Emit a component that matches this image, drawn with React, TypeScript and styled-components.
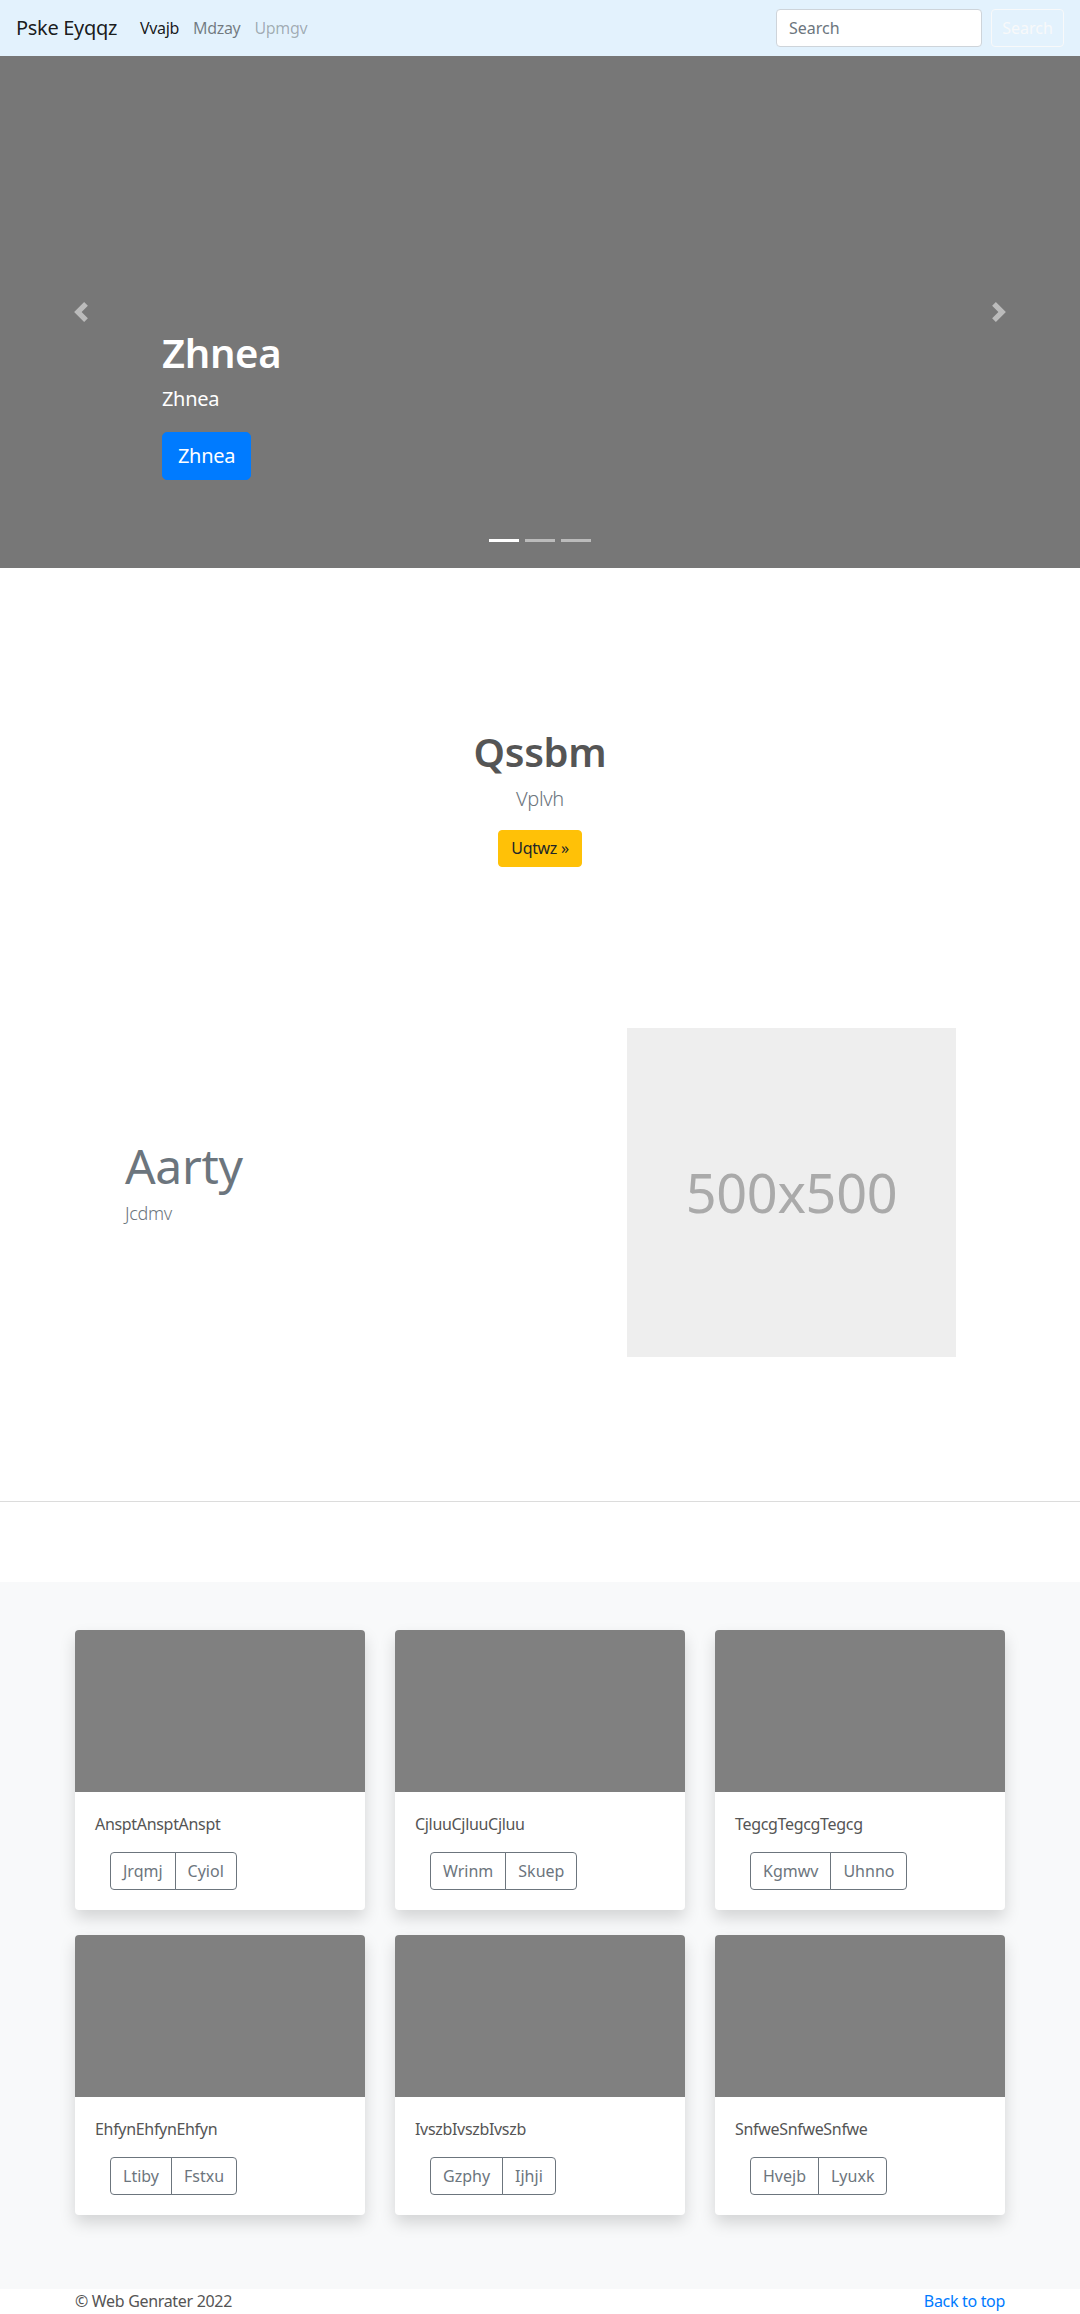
import React from "react";
import styled, { createGlobalStyle } from "styled-components";

const Global = createGlobalStyle`
  html, body { margin: 0; padding: 0; }
  body {
    font-family: "Noto Sans", "Open Sans", sans-serif;
    font-size: 16px;
    line-height: 1.5;
    letter-spacing: -0.02em;
    color: #212529;
    background: #fff;
  }
  * { box-sizing: border-box; }
`;

const NavBar = styled.nav`
  height: 56px;
  background: #e3f2fd;
  display: flex;
  align-items: center;
  padding: 0 16px 0 16px;
`;

const Brand = styled.a`
  font-size: 20px;
  line-height: 30px;
  color: rgba(0, 0, 0, 0.9);
  margin-right: 16px;
  text-decoration: none;
`;

const NavList = styled.div`
  display: flex;
  flex: 1;
`;

const NavLink = styled.a<{ $state: "active" | "normal" | "disabled" }>`
  padding: 8px 7px;
  font-size: 16px;
  line-height: 24px;
  text-decoration: none;
  color: ${(p) =>
    p.$state === "active"
      ? "rgba(0,0,0,0.9)"
      : p.$state === "disabled"
      ? "rgba(0,0,0,0.3)"
      : "rgba(0,0,0,0.5)"};
`;

const SearchForm = styled.form`
  display: flex;
  gap: 9px;
`;

const SearchInput = styled.input`
  width: 206px;
  height: 38px;
  padding: 6px 12px;
  font: inherit;
  font-size: 16px;
  color: #495057;
  background: #fff;
  border: 1px solid #ced4da;
  border-radius: 4px;
  &::placeholder { color: #6c757d; }
`;

const OutlineLightButton = styled.button`
  width: 73px;
  height: 38px;
  padding: 0;
  font: inherit;
  font-size: 16px;
  color: #f8f9fa;
  background: transparent;
  border: 1px solid #f8f9fa;
  border-radius: 4px;
`;

const Carousel = styled.section`
  position: relative;
  height: 512px;
  background: #777;
  overflow: hidden;
`;

const Control = styled.div<{ $side: "left" | "right" }>`
  position: absolute;
  top: 0;
  bottom: 0;
  ${(p) => p.$side}: 0;
  width: 15%;
  display: flex;
  align-items: center;
  justify-content: center;
  opacity: 0.5;
`;

const Indicators = styled.ol`
  position: absolute;
  left: 0;
  right: 0;
  bottom: 26px;
  margin: 0;
  padding: 0;
  list-style: none;
  display: flex;
  justify-content: center;
  gap: 6px;
`;

const Indicator = styled.li<{ $active?: boolean }>`
  width: 30px;
  height: 3px;
  background: #fff;
  opacity: ${(p) => (p.$active ? 1 : 0.5)};
`;

const Caption = styled.div`
  position: absolute;
  left: 15%;
  bottom: 88px;
  color: #fff;
`;

const CaptionTitle = styled.h1`
  margin: 0 0 7px;
  font-size: 40px;
  line-height: 48px;
  font-weight: 600;
`;

const CaptionText = styled.p`
  margin: 0 0 18px;
  font-size: 20px;
  line-height: 30px;
`;

const PrimaryLgButton = styled.a`
  display: inline-block;
  width: 89px;
  padding: 8px 0;
  text-align: center;
  font-size: 20px;
  line-height: 30px;
  color: #fff;
  background: #007bff;
  border: 1px solid #007bff;
  border-radius: 5px;
  text-decoration: none;
`;

const Intro = styled.section`
  padding: 160px 0 161px;
  text-align: center;
`;

const IntroTitle = styled.h2`
  margin: 0 0 8px;
  font-size: 40px;
  line-height: 48px;
  font-weight: 600;
  color: #555;
`;

const IntroText = styled.p`
  margin: 0 0 16px;
  font-size: 20px;
  line-height: 30px;
  font-weight: 300;
  color: #6c757d;
`;

const WarningButton = styled.a`
  display: inline-block;
  width: 84px;
  padding: 6px 0;
  text-align: center;
  font-size: 16px;
  line-height: 23px;
  color: #212529;
  background: #ffc107;
  border: 1px solid #ffc107;
  border-radius: 4px;
  text-decoration: none;
`;

const Feature = styled.section`
  display: flex;
  align-items: center;
  padding: 0 0 144px;
`;

const FeatureText = styled.div`
  width: 627px;
  padding-left: 125px;
`;

const FeatureTitle = styled.h2`
  margin: 0 0 5px;
  font-size: 48px;
  line-height: 59px;
  font-weight: 400;
  color: #6c757d;
`;

const FeatureLead = styled.p`
  margin: 0 0 23px;
  font-size: 18px;
  line-height: 27px;
  font-weight: 300;
  color: #6c757d;
`;

const Placeholder = styled.div`
  width: 329px;
  height: 329px;
  background: #eee;
  color: #aaa;
  display: flex;
  align-items: center;
  justify-content: center;
  font-size: 54px;
  font-weight: 400;
`;

const Rule = styled.hr`
  margin: 0 0 80px;
  border: 0;
  border-top: 1px solid #dcdcdc;
`;

const Album = styled.section`
  background: #f8f9fa;
  padding: 48px 0 74px;
`;

const CardGrid = styled.div`
  width: 930px;
  margin: 0 auto;
  display: grid;
  grid-template-columns: repeat(3, 1fr);
  column-gap: 30px;
  row-gap: 25px;
`;

const Card = styled.div`
  background: #fff;
  border-radius: 4px;
  overflow: hidden;
  box-shadow: 0 8px 16px rgba(0, 0, 0, 0.15);
`;

const CardImage = styled.div`
  height: 162px;
  background: #808080;
`;

const CardBody = styled.div`
  padding: 20px 20px 20px;
`;

const CardText = styled.p`
  margin: 0 0 16px;
  font-size: 16px;
  line-height: 24px;
  color: #555;
`;

const ButtonGroup = styled.div`
  display: inline-flex;
  margin-left: 15px;
`;

const GroupButton = styled.button`
  height: 38px;
  padding: 6px 12px;
  font: inherit;
  font-size: 16px;
  line-height: 24px;
  color: #6c757d;
  background: transparent;
  border: 1px solid #6c757d;
  &:first-child { border-radius: 4px 0 0 4px; }
  &:last-child { border-radius: 0 4px 4px 0; margin-left: -1px; }
`;

const Footer = styled.footer`
  width: 930px;
  margin: 0 auto;
  padding: 0 0 48px;
  display: flex;
  justify-content: space-between;
  font-size: 16px;
  line-height: 24px;
  color: #555;
`;

const FooterLink = styled.a`
  color: #007bff;
  text-decoration: none;
`;

const Chevron = ({ dir }: { dir: "prev" | "next" }) => (
  <svg width="20" height="20" viewBox="0 0 8 8" fill="#fff">
    {dir === "prev" ? (
      <path d="M5.25 0l-4 4 4 4 1.5-1.5L4.25 4l2.5-2.5L5.25 0z" />
    ) : (
      <path d="M2.75 0l-1.5 1.5L3.75 4l-2.5 2.5L2.75 8l4-4-4-4z" />
    )}
  </svg>
);

const cards = [
  { title: "AnsptAnsptAnspt", a: "Jrqmj", b: "Cyiol" },
  { title: "CjluuCjluuCjluu", a: "Wrinm", b: "Skuep" },
  { title: "TegcgTegcgTegcg", a: "Kgmwv", b: "Uhnno" },
  { title: "EhfynEhfynEhfyn", a: "Ltiby", b: "Fstxu" },
  { title: "IvszbIvszbIvszb", a: "Gzphy", b: "Ijhji" },
  { title: "SnfweSnfweSnfwe", a: "Hvejb", b: "Lyuxk" },
];

export default function App() {
  return (
    <>
      <Global />
      <NavBar>
        <Brand href="#">Pske Eyqqz</Brand>
        <NavList>
          <NavLink $state="active" href="#">Vvajb</NavLink>
          <NavLink $state="normal" href="#">Mdzay</NavLink>
          <NavLink $state="disabled" href="#">Upmgv</NavLink>
        </NavList>
        <SearchForm onSubmit={(e) => e.preventDefault()}>
          <SearchInput placeholder="Search" />
          <OutlineLightButton type="submit">Search</OutlineLightButton>
        </SearchForm>
      </NavBar>

      <Carousel>
        <Control $side="left"><Chevron dir="prev" /></Control>
        <Control $side="right"><Chevron dir="next" /></Control>
        <Caption>
          <CaptionTitle>Zhnea</CaptionTitle>
          <CaptionText>Zhnea</CaptionText>
          <PrimaryLgButton href="#">Zhnea</PrimaryLgButton>
        </Caption>
        <Indicators>
          <Indicator $active />
          <Indicator />
          <Indicator />
        </Indicators>
      </Carousel>

      <Intro>
        <IntroTitle>Qssbm</IntroTitle>
        <IntroText>Vplvh</IntroText>
        <WarningButton href="#">Uqtwz »</WarningButton>
      </Intro>

      <Feature>
        <FeatureText>
          <FeatureTitle>Aarty</FeatureTitle>
          <FeatureLead>Jcdmv</FeatureLead>
        </FeatureText>
        <Placeholder>500x500</Placeholder>
      </Feature>

      <Rule />

      <Album>
        <CardGrid>
          {cards.map((c) => (
            <Card key={c.title}>
              <CardImage />
              <CardBody>
                <CardText>{c.title}</CardText>
                <ButtonGroup>
                  <GroupButton>{c.a}</GroupButton>
                  <GroupButton>{c.b}</GroupButton>
                </ButtonGroup>
              </CardBody>
            </Card>
          ))}
        </CardGrid>
      </Album>

      <Footer>
        <span>© Web Genrater 2022</span>
        <FooterLink href="#">Back to top</FooterLink>
      </Footer>
    </>
  );
}
